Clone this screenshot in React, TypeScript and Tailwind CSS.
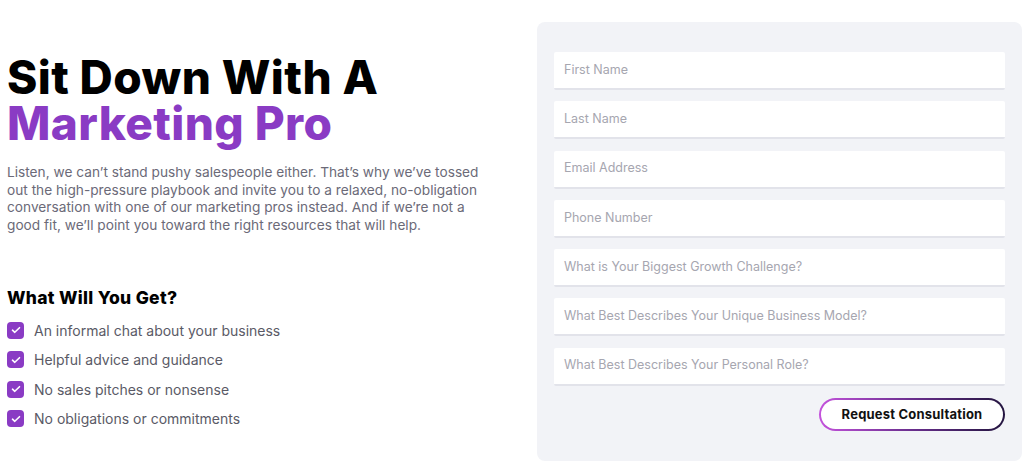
import React from "react";

const fields = [
  "First Name",
  "Last Name",
  "Email Address",
  "Phone Number",
  "What is Your Biggest Growth Challenge?",
  "What Best Describes Your Unique Business Model?",
  "What Best Describes Your Personal Role?",
];

const items = [
  "An informal chat about your business",
  "Helpful advice and guidance",
  "No sales pitches or nonsense",
  "No obligations or commitments",
];

function Check() {
  return (
    <span className="flex h-[17px] w-[17px] shrink-0 items-center justify-center rounded-[4px] bg-[#8a3bc4]">
      <svg width="10" height="8" viewBox="0 0 10 8" fill="none">
        <path d="M1.5 4.2L3.8 6.3L8.5 1.7" stroke="white" strokeWidth="1.6" strokeLinecap="round" strokeLinejoin="round" />
      </svg>
    </span>
  );
}

export default function App() {
  const font = { fontFamily: "Inter, 'Open Sans', sans-serif" };
  return (
    <div className="flex h-[471px] w-[1024px] bg-white" style={font}>
      <div className="flex w-[537px] flex-col pl-[7px] pt-[54px]">
        <h1 className="text-[46px] font-extrabold leading-[46px] tracking-[0.4px] text-black">
          Sit Down With A
          <br />
          <span className="text-[#8a3bc4]">Marketing Pro</span>
        </h1>
        <p className="mt-[18px] w-[492px] text-[13.7px] leading-[17.6px] text-[#6b6a78]">
          Listen, we can’t stand pushy salespeople either. That’s why we’ve tossed out the high-pressure playbook and invite you to a relaxed, no-obligation conversation with one of our marketing pros instead. And if we’re not a good fit, we’ll point you toward the right resources that will help.
        </p>
        <h2 className="mt-[53px] text-[17.5px] font-extrabold leading-[22px] tracking-[0.3px] text-black">What Will You Get?</h2>
        <ul className="mt-[12px] flex flex-col gap-[12px]">
          {items.map((t) => (
            <li key={t} className="flex h-[17.5px] items-center gap-[10px] text-[14px] text-[#5a5a66]">
              <Check />
              <span>{t}</span>
            </li>
          ))}
        </ul>
      </div>
      <div className="mt-[22px] flex h-[439px] w-[485px] flex-col rounded-[8px] bg-[#f2f3f7] px-[17px] pt-[30px]">
        <div className="flex flex-col gap-[11.3px]">
          {fields.map((f) => (
            <div
              key={f}
              className="flex h-[38px] items-center rounded-[2px] border-b-2 border-[#e2e3ea] bg-white pl-[10px] text-[12.5px] text-[#a6a6b0]"
            >
              {f}
            </div>
          ))}
        </div>
        <div className="mt-[12px] flex justify-end">
          <div className="rounded-full bg-gradient-to-r from-[#c452dc] via-[#6a2e8e] to-[#241540] p-[2px]">
            <div className="flex h-[29px] w-[182px] items-center justify-center rounded-full bg-white text-[13px] font-bold tracking-[0.2px] text-[#111]">
              Request Consultation
            </div>
          </div>
        </div>
      </div>
    </div>
  );
}
